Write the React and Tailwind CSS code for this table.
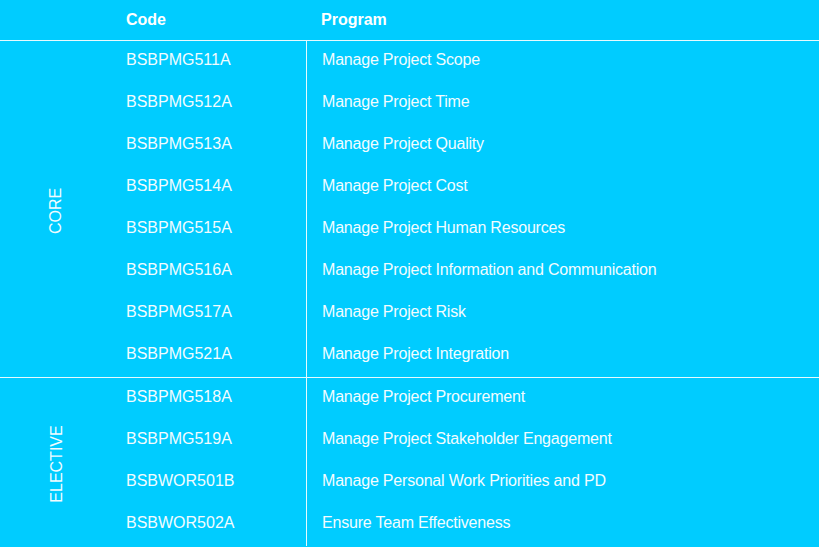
const sections = [
  {
    label: "CORE",
    rows: [
      ["BSBPMG511A", "Manage Project Scope"],
      ["BSBPMG512A", "Manage Project Time"],
      ["BSBPMG513A", "Manage Project Quality"],
      ["BSBPMG514A", "Manage Project Cost"],
      ["BSBPMG515A", "Manage Project Human Resources"],
      ["BSBPMG516A", "Manage Project Information and Communication"],
      ["BSBPMG517A", "Manage Project Risk"],
      ["BSBPMG521A", "Manage Project Integration"],
    ],
  },
  {
    label: "ELECTIVE",
    rows: [
      ["BSBPMG518A", "Manage Project Procurement"],
      ["BSBPMG519A", "Manage Project Stakeholder Engagement"],
      ["BSBWOR501B", "Manage Personal Work Priorities and PD"],
      ["BSBWOR502A", "Ensure Team Effectiveness"],
    ],
  },
];

function Section({ label, rows, last }) {
  return (
    <div className={`flex ${last ? "" : "border-b border-[#e6faff]"}`}>
      <div className="flex w-[111px] shrink-0 items-center justify-center pl-[2px] pt-[4px]">
        <span className="-rotate-90 whitespace-nowrap text-[16px] leading-5">{label}</span>
      </div>
      <div className="w-[196px] shrink-0 border-r border-[#e6faff] pl-[15px]">
        {rows.map(([code]) => (
          <div key={code} className="h-[42px] pt-[9px] leading-5">
            {code}
          </div>
        ))}
      </div>
      <div className="flex-1 pl-[15px] tracking-[-0.2px]">
        {rows.map(([code, name]) => (
          <div key={code} className="h-[42px] pt-[9px] leading-5">
            {name}
          </div>
        ))}
      </div>
    </div>
  );
}

export default function App() {
  return (
    <div className="h-[547px] w-[819px] overflow-hidden bg-[#00ccff] text-[16px] text-[#f2fcff] [font-family:'Liberation_Sans',Arial,sans-serif]">
      <div className="flex h-[41px] border-b border-[#e6faff] pt-[10px] font-bold leading-5 text-white">
        <div className="w-[111px] shrink-0" />
        <div className="w-[195px] shrink-0 pl-[15px]">Code</div>
        <div className="pl-[15px]">Program</div>
      </div>
      {sections.map((s, i) => (
        <Section key={s.label} {...s} last={i === sections.length - 1} />
      ))}
    </div>
  );
}
